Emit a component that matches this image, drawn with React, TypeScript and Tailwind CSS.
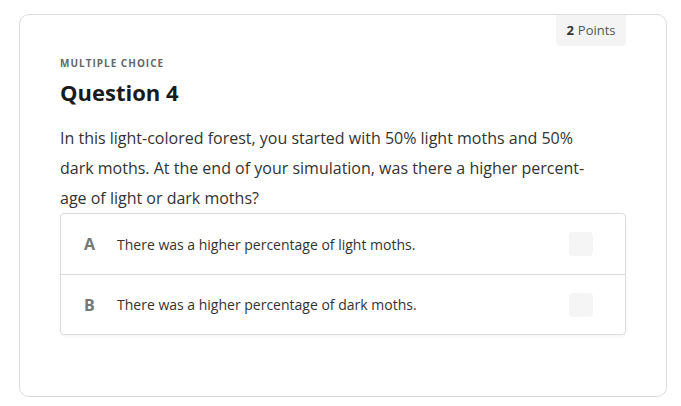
const options = [
  { letter: "A", text: "There was a higher percentage of light moths." },
  { letter: "B", text: "There was a higher percentage of dark moths." },
];

export default function App() {
  return (
    <div className="h-[406px] w-[681px] bg-white pl-[19px] pt-[14px]" style={{ fontFamily: '"Open Sans", sans-serif' }}>
      <div className="h-[383px] w-[648px] rounded-[10px] border border-[#dcdcdc] px-10">
        <div className="flex justify-end">
          <div className="flex h-[31px] w-[70px] items-center justify-center rounded-b-[4px] bg-[#f4f4f4] text-[13px] text-[#555]">
            <span className="mr-1 font-bold text-[#333]">2</span>Points
          </div>
        </div>
        <div className="mt-[10px] text-[10px] font-bold leading-[14px] tracking-[0.1em] text-[#666]">MULTIPLE CHOICE</div>
        <h1 className="mt-[7px] text-[22px] font-bold leading-[30px] text-[#1a1a1a]">Question 4</h1>
        <p className="mt-[16px] text-[16px] leading-[30px] text-[#333]">
          In this light-colored forest, you started with 50% light moths and 50%
          <br />
          dark moths. At the end of your simulation, was there a higher percent-
          <br />
          age of light or dark moths?
        </p>
        <div className="rounded-[4px] border border-[#dcdcdc] shadow-[0_1px_3px_rgba(0,0,0,0.06)]">
          {options.map((o, i) => (
            <div key={o.letter} className={`flex h-[60px] items-center pl-[23px] pr-[32px] ${i > 0 ? "border-t border-[#dcdcdc]" : ""}`}>
              <span className="w-[33px] text-[16px] font-bold text-[#777]">{o.letter}</span>
              <span className="flex-1 text-[14px] text-[#333]">{o.text}</span>
              <span className="h-6 w-6 rounded-[4px] bg-[#f5f5f5]" />
            </div>
          ))}
        </div>
      </div>
    </div>
  );
}
